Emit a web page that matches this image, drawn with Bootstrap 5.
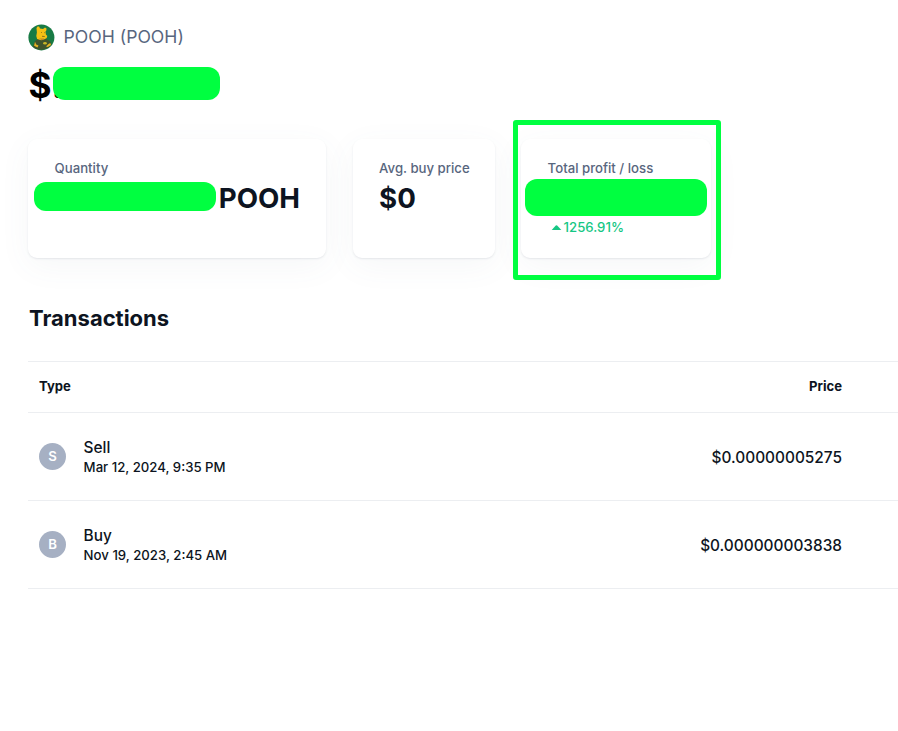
<!DOCTYPE html>
<html lang="en">
<head>
<meta charset="utf-8">
<meta name="viewport" content="width=device-width, initial-scale=1">
<title>POOH transactions</title>
<link href="https://cdn.jsdelivr.net/npm/bootstrap@5.3.0/dist/css/bootstrap.min.css" rel="stylesheet">
<style>
body{font-family:Inter,"Liberation Sans",sans-serif;color:#0d1421;background:#fff;overflow:hidden}
.page-wrap{padding:24px 0 0 28px}
.coin-title{height:26px;gap:8.6px}
.coin-name{font-size:17.6px;color:#58667e;line-height:26px}
.balance{height:40px;margin-top:15px;font-size:35.2px;line-height:41px;color:#000;padding-left:.6px}
.hide-bar{position:absolute;background:#00ff40;border-radius:12px}
.hide-balance{left:25px;top:2px;width:167px;height:33px}
.hide-quantity{left:6px;top:43px;width:182px;height:29px}
.hide-profit{left:4px;top:40px;width:182px;height:37px}
.stat-row{margin-top:34px;gap:26.5px}
.stat-card{height:119px;border:0;border-radius:9px;padding:19px 26px 0 26.6px;box-shadow:0 1px 2px rgba(88,102,126,.13),0 8px 32px rgba(88,102,126,.055)}
.stat-label{font-size:13.2px;line-height:20px;color:#58667e}
.stat-value{font-size:27.7px;line-height:39px;color:#0d1421;padding-top:1px;height:39px}
.stat-change{font-size:13.2px;line-height:20px;color:#16c784}
.stat-change svg{flex:none;margin:0 2px 0 3px}
.frame-mark{position:absolute;left:-8px;top:-19px;width:208px;height:160px;border:5px solid #00ff40;border-radius:3px}
.section-title{font-size:22px;line-height:30px;margin:45px 0 0 1px;color:#0d1421}
.tx-table{margin-top:28px;border-top:1px solid #eceef1}
.tx-line{border-bottom:1px solid #eceef1;padding:0 56px 0 11px;height:88px}
.tx-head{height:51px;font-size:13.1px}
.tx-icon{width:27px;height:27px;background:#a6b0c3;font-size:13.2px;margin-right:17.6px}
.tx-type,.tx-price{font-size:15.4px;line-height:21px}
.tx-price{padding-top:1px}
.tx-type{padding-top:1px;height:21px}
.tx-date{font-size:13.2px;line-height:20px}
</style>
</head>
<body>
<main class="page-wrap">
  <header>
    <div class="coin-title d-flex align-items-center">
      <svg width="27" height="27" viewBox="0 0 27 27" aria-hidden="true">
        <circle cx="13.4" cy="13.4" r="13" fill="#187b45"/>
        <path d="M5.5 21l1.5-4 3-2 8 0 4 2 1.5 3.5a13 13 0 0 1-19 2z" fill="#3f542c"/>
        <path d="M8.5 4l1-1.6 1.6 0 .9 2 3 .6 2-1.4 1.5.8-.2 2-.8 1 .4 3.2 1.4 1.4-.6 2-2.2 1.2-3.4 1-4-1.2-.8-3 .6-3.5z" fill="#f6c114"/>
        <path d="M11 14.5l5.5 0-2.5 1.8z" fill="#bc8425"/>
        <path d="M7 17.8l1.2 2.8 2.3 1-1 1.8-3.4-1.6zM20.5 20l1.8-1 .8 2-3.3 2-1.8-.6z" fill="#e2b323"/>
        <ellipse cx="17" cy="19.3" rx="1.9" ry="1.3" fill="#c9b727"/>
        <path d="M13 8.5h.8M16.3 8.7h.8M14 12.3l2.7.2" stroke="#59501e" stroke-width=".7"/>
      </svg>
      <span class="coin-name">POOH (POOH)</span>
    </div>
    <div class="balance fw-bold position-relative">$.<span class="hide-bar hide-balance"></span></div>
  </header>

  <section class="stat-row d-flex">
    <div class="card stat-card" style="width:298px">
      <div class="stat-label fw-medium">Quantity</div>
      <div class="stat-value fw-bold text-end">POOH</div>
      <span class="hide-bar hide-quantity"></span>
    </div>
    <div class="card stat-card" style="width:142px">
      <div class="stat-label fw-medium text-nowrap">Avg. buy price</div>
      <div class="stat-value fw-bold">$0</div>
    </div>
    <div class="card stat-card" style="width:190px">
      <div class="stat-label fw-medium text-nowrap">Total profit / loss</div>
      <div class="stat-value">&nbsp;</div>
      <div class="stat-change fw-medium d-flex align-items-center">
        <svg width="11" height="5" viewBox="0 0 11 5" aria-hidden="true"><path d="M.7 5L4.8.5q.7-.6 1.4 0L10.3 5z" fill="#16c784"/></svg>
        <span>1256.91%</span>
      </div>
      <span class="hide-bar hide-profit"></span>
      <span class="frame-mark"></span>
    </div>
  </section>

  <h2 class="section-title fw-bold">Transactions</h2>
  <section class="tx-table">
    <div class="tx-line tx-head d-flex align-items-center justify-content-between fw-bold"><span>Type</span><span>Price</span></div>
    <div class="tx-line d-flex align-items-center">
      <span class="tx-icon rounded-circle d-flex align-items-center justify-content-center text-white fw-semibold">S</span>
      <div class="flex-grow-1"><div class="tx-type fw-medium">Sell</div><div class="tx-date fw-medium">Mar 12, 2024, 9:35 PM</div></div>
      <span class="tx-price fw-medium">$0.00000005275</span>
    </div>
    <div class="tx-line d-flex align-items-center">
      <span class="tx-icon rounded-circle d-flex align-items-center justify-content-center text-white fw-semibold">B</span>
      <div class="flex-grow-1"><div class="tx-type fw-medium">Buy</div><div class="tx-date fw-medium">Nov 19, 2023, 2:45 AM</div></div>
      <span class="tx-price fw-medium">$0.000000003838</span>
    </div>
  </section>
</main>
<script src="https://cdn.jsdelivr.net/npm/bootstrap@5.3.0/dist/js/bootstrap.bundle.min.js"></script>
</body>
</html>
